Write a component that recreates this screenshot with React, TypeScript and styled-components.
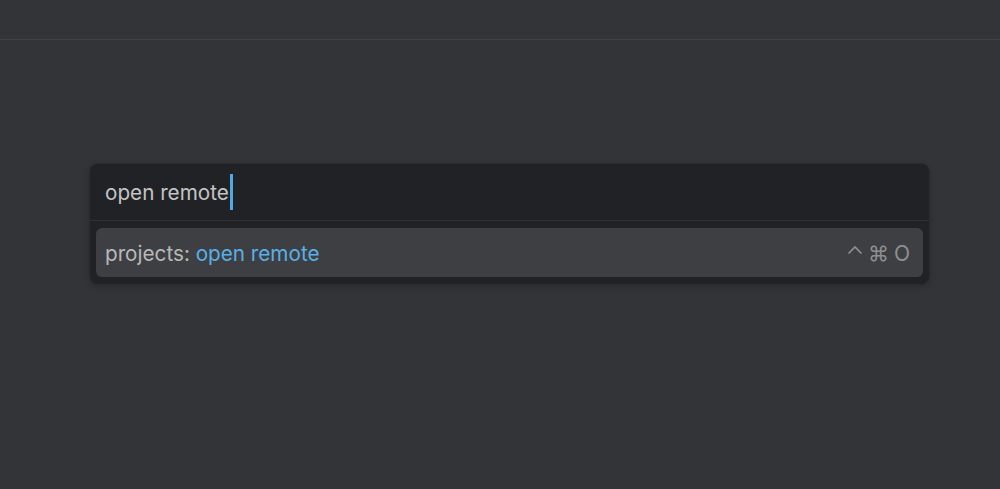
import React from 'react';
import styled, { createGlobalStyle } from 'styled-components';

const GlobalStyle = createGlobalStyle`
  html, body {
    margin: 0;
    padding: 0;
    background: #333438;
    font-family: Inter, 'Noto Sans', sans-serif;
  }
`;

const Page = styled.div`
  width: 1000px;
  height: 489px;
  display: flex;
  flex-direction: column;
  background: #333438;
`;

const TitleBar = styled.div`
  height: 39px;
  border-bottom: 1px solid #404146;
`;

const Workspace = styled.div`
  flex: 1;
  padding: 124px 70px 0 90px;
`;

const Palette = styled.div`
  width: 839px;
  background: #212226;
  border-radius: 8px;
  box-shadow: 0 0 0 1px #2a2b2f, 0 2px 6px rgba(0, 0, 0, 0.25);
  overflow: hidden;
`;

const InputRow = styled.div`
  height: 56px;
  display: flex;
  align-items: center;
  padding: 0 15px;
  border-bottom: 1px solid #2f3034;
  font-size: 20.7px;
  color: #c4c4c4;
`;

const Caret = styled.span`
  display: inline-block;
  width: 3px;
  height: 36px;
  margin-left: 1px;
  background: #4fa8e8;
`;

const List = styled.div`
  padding: 7px 6px 7px 6px;
`;

const Item = styled.div<{ selected?: boolean }>`
  height: 49px;
  border-radius: 6px;
  display: flex;
  align-items: center;
  justify-content: space-between;
  padding: 2px 13px 0 9px;
  box-sizing: border-box;
  background: ${p => (p.selected ? '#3e3f43' : 'transparent')};
  font-size: 20.7px;
  color: #b8b8b8;
`;

const Match = styled.span`
  color: #5aafe6;
`;

const Keys = styled.span`
  color: #8e8f93;
  font-size: 21px;
  display: flex;
  gap: 5px;
  align-items: center;
`;

const ControlKey = styled.svg`
  width: 16px;
  height: 10px;
  margin-top: -8px;
`;

export default function App() {
  return (
    <Page>
      <GlobalStyle />
      <TitleBar />
      <Workspace>
        <Palette>
          <InputRow>
            open remote
            <Caret />
          </InputRow>
          <List>
            <Item selected>
              <span>
                projects: <Match>open remote</Match>
              </span>
              <Keys>
                <ControlKey viewBox="0 0 16 10" aria-label="control">
                  <path d="M1.5 8.5 L8 2 L14.5 8.5" fill="none" stroke="#8e8f93" strokeWidth="1.6" />
                </ControlKey>
                <span>⌘</span>
                <span>O</span>
              </Keys>
            </Item>
          </List>
        </Palette>
      </Workspace>
    </Page>
  );
}
